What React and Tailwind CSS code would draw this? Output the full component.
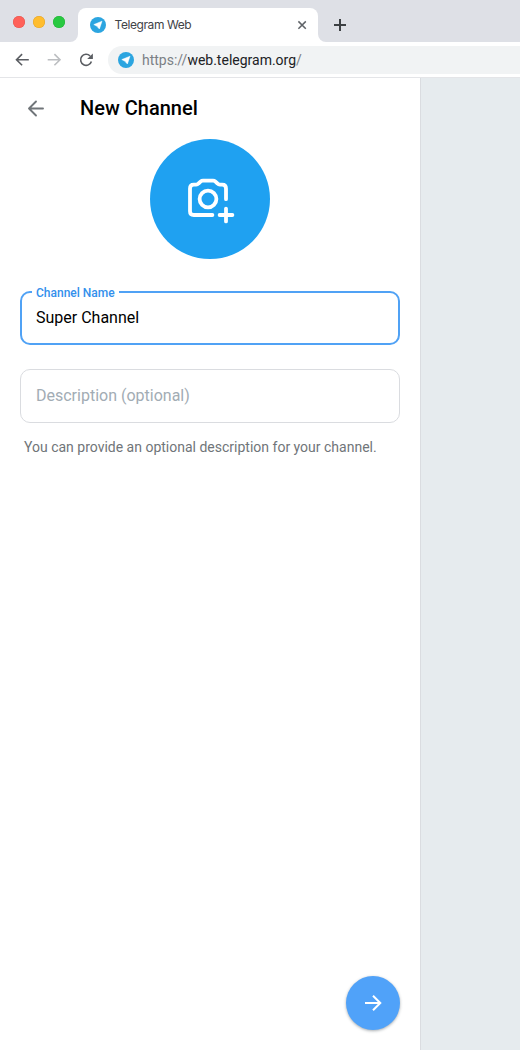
import React from "react";

function TelegramLogo() {
  return (
    <svg className="block size-4 shrink-0" viewBox="0 0 16 16">
      <circle cx="8" cy="8" r="8" fill="#2ca5e0" />
      <path d="M12 4.2 3.8 7.6 6.5 9.1 7.4 9.1 7.3 9.8 9.4 12Z" fill="#fff" stroke="#fff" strokeWidth="0.5" strokeLinejoin="round" />
    </svg>
  );
}

function TabStrip() {
  return (
    <div className="flex h-[42px] bg-white">
      <div className="flex w-[78px] items-center gap-2 rounded-br-lg bg-[#dee0e6] pt-px pl-[13px]">
        <span className="size-3 rounded-full bg-[#ff6159] ring-[0.5px] ring-[#e2564f] ring-inset" />
        <span className="size-3 rounded-full bg-[#ffbd2e] ring-[0.5px] ring-[#e2a32b] ring-inset" />
        <span className="size-3 rounded-full bg-[#28c941] ring-[0.5px] ring-[#22b237] ring-inset" />
      </div>
      <div className="w-[240px] bg-[#dee0e6] pt-2">
        <div className="flex h-[34px] items-center rounded-t-lg bg-white pr-[11px] pl-3">
          <TelegramLogo />
          <span className="ml-[8.5px] flex-1 text-[12px] leading-4 tracking-[-0.42px] text-[#3f4347]">Telegram Web</span>
          <svg className="size-[10px]" viewBox="0 0 10 10" fill="none" stroke="#5f6368" strokeWidth="1.5">
            <path d="m1.4 1.4 7.4 7.4M8.8 1.4 1.4 8.8" />
          </svg>
        </div>
      </div>
      <div className="flex flex-1 items-center rounded-bl-lg bg-[#dee0e6] pt-2 pl-4">
        <svg className="size-3" viewBox="0 0 12 12" fill="none" stroke="#3c4043" strokeWidth="2">
          <path d="M6 0v12M0 6h12" />
        </svg>
      </div>
    </div>
  );
}

function Toolbar() {
  return (
    <div className="flex h-9 items-center border-b border-[#e4e5e8] bg-white pl-[14px]">
      <svg className="size-4" viewBox="0 0 16 16" fill="none" stroke="#5a5d62" strokeWidth="1.6">
        <path d="M14.8 7.7H2.6M8.1 2.1 2.5 7.7l5.6 5.6" />
      </svg>
      <svg className="ml-4 size-4" viewBox="0 0 16 16" fill="none" stroke="#bcbec1" strokeWidth="1.6">
        <path d="M1.7 7.7h12.2M8.4 2.1 14 7.7l-5.6 5.6" />
      </svg>
      <svg className="ml-4 size-4" viewBox="0 0 16 16" fill="none">
        <path d="M13.4 9.4A5.5 5.5 0 1 1 12.1 4" stroke="#5a5d62" strokeWidth="1.6" />
        <path d="M14.9 1.4v5.7H9.2Z" fill="#5a5d62" />
      </svg>
      <div className="ml-[14px] flex h-7 flex-1 items-center rounded-l-full bg-[#f1f3f4] pl-[10px]">
        <TelegramLogo />
        <span className="ml-2 text-[14px] leading-5 text-[#7b8085]">
          https://<span className="text-[#202124]">web.telegram.org</span>/
        </span>
      </div>
    </div>
  );
}

function CameraAddIcon() {
  return (
    <svg className="size-[60px]" viewBox="180 169 60 60" fill="none" stroke="#fff" strokeWidth="3.8" strokeLinecap="round" strokeLinejoin="round">
      <path d="M226 199.2V188.4Q226 184.6 222.2 184.6H219.8Q218.5 184.6 217.5 183.5L215.2 181.4Q214.3 180.6 213 180.6H203Q201.7 180.6 200.8 181.4L198.5 183.5Q197.5 184.6 196.2 184.6H193.8Q190 184.6 190 188.4V211.2Q190 215 193.8 215H212.4" />
      <circle cx="208" cy="199" r="8.4" />
      <path d="M226 208.6v12.8M219.6 215h12.8" />
    </svg>
  );
}

function ChannelForm() {
  return (
    <main className="flex w-[421px] flex-col border-r border-[#dadce0] bg-white px-5">
      <header className="flex h-[61px] items-center pb-[2px]">
        <svg className="ml-1 size-6" viewBox="0 0 24 24" fill="none" stroke="#707579" strokeWidth="1.9" strokeLinecap="round" strokeLinejoin="round">
          <path d="M19 12.5H5M12 5.5l-7 7 7 7" />
        </svg>
        <h1 className="ml-8 text-[20px] leading-6 font-medium text-black">New Channel</h1>
      </header>
      <div className="flex size-[120px] items-center justify-center self-center rounded-full bg-[#1fa1f1]">
        <CameraAddIcon />
      </div>
      <div className="relative mt-8 flex h-[54px] items-center rounded-[10px] border-2 border-[#50a2f5] pl-[14px]">
        <label className="absolute -top-[8px] left-[10px] bg-white px-1 text-[12px] leading-4 font-medium text-[#3390ec]">Channel Name</label>
        <span className="text-[16px] leading-6 text-black">Super Channel</span>
      </div>
      <div className="mt-6 flex h-[54px] items-center rounded-[10px] border border-[#dadce0] pl-[15px]">
        <span className="text-[16px] leading-6 text-[#a2acb4]">Description (optional)</span>
      </div>
      <p className="mt-[14px] pl-1 text-[14px] leading-5 text-[#707579]">You can provide an optional description for your channel.</p>
      <button className="mt-auto mb-5 flex size-[54px] items-center justify-center self-end rounded-full bg-[#50a2f9] shadow-[0_1px_3px_rgba(60,70,80,0.45)]">
        <svg className="size-6" viewBox="0 0 24 24" fill="none" stroke="#fff" strokeWidth="2">
          <path d="M4 12h15M12 4.7l7.3 7.3-7.3 7.3" />
        </svg>
      </button>
    </main>
  );
}

export default function App() {
  return (
    <div className="flex h-[1050px] w-[520px] flex-col overflow-hidden bg-white font-['Roboto',sans-serif]">
      <div className="font-['Inter',sans-serif]">
        <TabStrip />
      </div>
      <Toolbar />
      <div className="flex min-h-0 flex-1 bg-[#e6ebee]">
        <ChannelForm />
      </div>
    </div>
  );
}
